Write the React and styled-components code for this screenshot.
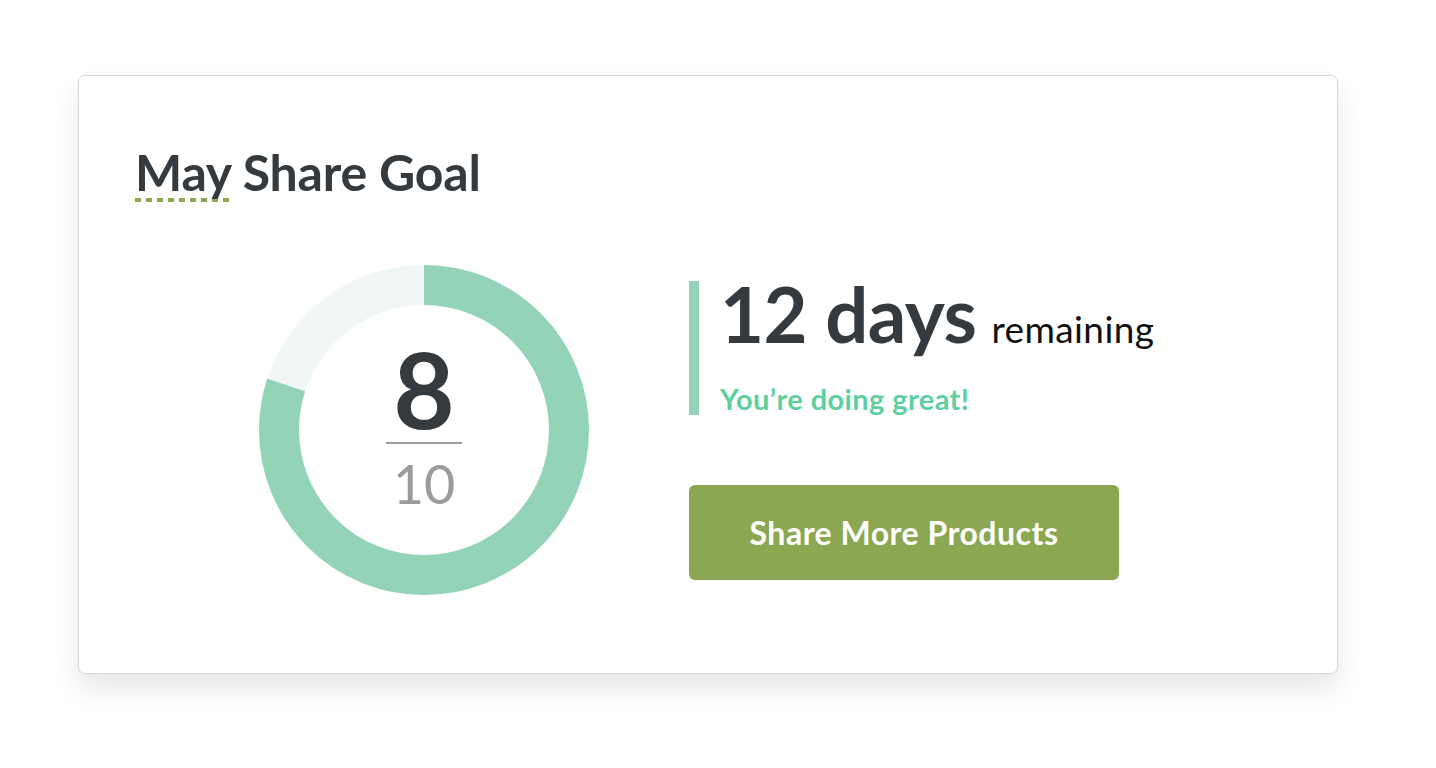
import React from "react";
import styled, { createGlobalStyle } from "styled-components";

const GlobalStyle = createGlobalStyle`
  body {
    margin: 0;
    background: #ffffff;
    font-family: "Lato", "Open Sans", sans-serif;
  }
`;

function Donut({ value, total }) {
  const r = 145;
  const c = 2 * Math.PI * r;
  const done = (value / total) * c;
  return (
    <DonutWrap>
      <svg width="330" height="330" viewBox="0 0 330 330">
        <circle cx="165" cy="165" r={r} fill="none" stroke="#f1f7f6" strokeWidth="40" />
        <circle
          cx="165"
          cy="165"
          r={r}
          fill="none"
          stroke="#93d4b9"
          strokeWidth="40"
          strokeDasharray={`${done} ${c}`}
          transform="rotate(-90 165 165)"
        />
      </svg>
      <Count>
        <Value>{value}</Value>
        <Divider />
        <Total>{total}</Total>
      </Count>
    </DonutWrap>
  );
}

export default function App() {
  return (
    <>
      <GlobalStyle />
      <Page>
        <Card>
          <Title>
            <Dotted>May</Dotted> Share Goal
          </Title>
          <Body>
            <Donut value={8} total={10} />
            <Info>
              <Status>
                <Days>
                  12 days <Remaining>remaining</Remaining>
                </Days>
                <Cheer>You’re doing great!</Cheer>
              </Status>
              <Button>Share More Products</Button>
            </Info>
          </Body>
        </Card>
      </Page>
    </>
  );
}

const Page = styled.div`
  min-height: 768px;
  box-sizing: border-box;
  padding: 75px 0 0 78px;
`;

const Card = styled.div`
  box-sizing: border-box;
  width: 1260px;
  height: 599px;
  border: 1.5px solid #d6d6d6;
  border-radius: 7px;
  background: #fff;
  box-shadow: 0 14px 28px rgba(0, 0, 0, 0.1);
  padding: 62px 56px 0;
`;

const Title = styled.h1`
  margin: 0;
  font-size: 50px;
  font-weight: 700;
  line-height: 68px;
  color: #353a3e;
  letter-spacing: -0.2px;
`;

const Dotted = styled.span`
  background-image: repeating-linear-gradient(
    to right,
    #8ba752 0 6px,
    transparent 6px 11px
  );
  background-size: 100% 4px;
  background-position: 0 100%;
  background-repeat: no-repeat;
`;

const Body = styled.div`
  display: flex;
  align-items: center;
  margin-top: 59px;
  padding-left: 124px;
  gap: 100px;
`;

const DonutWrap = styled.div`
  position: relative;
  width: 330px;
  height: 330px;
  flex-shrink: 0;
`;

const Count = styled.div`
  position: absolute;
  inset: 0;
  display: flex;
  flex-direction: column;
  align-items: center;
  justify-content: center;
  padding-bottom: 8px;
`;

const Value = styled.div`
  font-size: 106px;
  font-weight: 700;
  line-height: 96px;
  color: #353a3e;
`;

const Divider = styled.div`
  width: 76px;
  height: 2px;
  background: #9b9b9b;
  margin: 6px 0 12px;
`;

const Total = styled.div`
  font-size: 54px;
  font-weight: 400;
  line-height: 56px;
  color: #9b9b9b;
`;

const Info = styled.div`
  display: flex;
  flex-direction: column;
  gap: 70px;
`;

const Status = styled.div`
  border-left: 10px solid #93d4b9;
  padding-left: 21px;
  height: 134px;
  box-sizing: border-box;
`;

const Days = styled.div`
  font-size: 76px;
  font-weight: 700;
  line-height: 66px;
  color: #353a3e;
  white-space: nowrap;
  letter-spacing: -0.5px;
`;

const Remaining = styled.span`
  font-size: 37px;
  font-weight: 400;
  color: #111;
  margin-left: -3px;
  letter-spacing: 0.4px;
`;

const Cheer = styled.div`
  margin-top: 19px;
  font-size: 29px;
  font-weight: 700;
  color: #5fcf9f;
  letter-spacing: 0.4px;
`;

const Button = styled.button`
  width: 430px;
  height: 95px;
  border: none;
  border-radius: 6px;
  background: #8ba752;
  color: #fff;
  font-family: "Lato", sans-serif;
  font-size: 32px;
  font-weight: 700;
  letter-spacing: 0.5px;
  cursor: pointer;
`;
